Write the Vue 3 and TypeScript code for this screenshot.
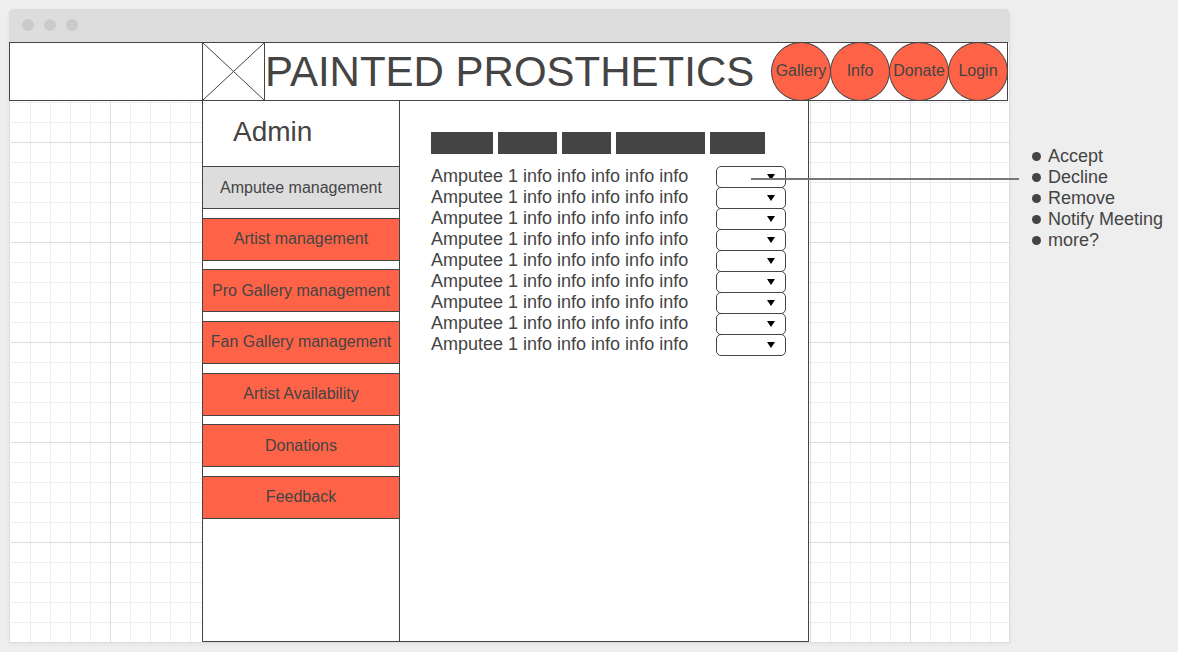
<script setup lang="ts">
import { ref } from 'vue'

interface Row {
  id: number
  label: string
}

const navLinks: string[] = ['Gallery', 'Info', 'Donate', 'Login']

const sections: string[] = [
  'Amputee management',
  'Artist management',
  'Pro Gallery management',
  'Fan Gallery management',
  'Artist Availability',
  'Donations',
  'Feedback',
]
const active = ref<string>(sections[0])

const filters: string[] = ['w62', 'w59', 'w49', 'w89', 'w55']

const rows: Row[] = Array.from({ length: 9 }, (_, i) => ({
  id: i + 1,
  label: 'Amputee 1 info info info info info',
}))

const actions: string[] = ['Accept', 'Decline', 'Remove', 'Notify Meeting', 'more?']
</script>

<template>
  <div class="page">
    <div class="window">
      <div class="titlebar">
        <span class="dot"></span>
        <span class="dot"></span>
        <span class="dot"></span>
      </div>
      <div class="canvas">
        <header class="header">
          <svg class="logo" viewBox="0 0 63 59" aria-hidden="true">
            <rect x="0.5" y="0.5" width="62" height="58" fill="#fff" stroke="#444" />
            <path d="M0.5 0.5L62.5 58.5M62.5 0.5L0.5 58.5" fill="none" stroke="#444" />
          </svg>
          <h1 class="brand">PAINTED PROSTHETICS</h1>
          <nav class="nav">
            <a v-for="link in navLinks" :key="link" class="nav-link" href="#">{{ link }}</a>
          </nav>
        </header>
        <div class="body">
          <aside class="sidebar">
            <h2 class="heading">Admin</h2>
            <div class="menu">
              <button
                v-for="section in sections"
                :key="section"
                type="button"
                class="menu-item"
                :class="{ active: section === active }"
                @click="active = section"
              >
                {{ section }}
              </button>
            </div>
          </aside>
          <main class="content">
            <div class="filters">
              <span v-for="f in filters" :key="f" class="filter" :class="f"></span>
            </div>
            <ul class="rows">
              <li v-for="row in rows" :key="row.id" class="row">
                <label :for="`action-${row.id}`">{{ row.label }}</label>
                <span class="picker">
                  <select :id="`action-${row.id}`" class="select"></select>
                  <svg class="arrow" viewBox="0 0 8 6" aria-hidden="true">
                    <path d="M0 0H8L4 6Z" fill="#000" />
                  </svg>
                  <span v-if="row.id === 1" class="connector"></span>
                </span>
              </li>
            </ul>
          </main>
        </div>
      </div>
    </div>
    <ul class="notes">
      <li v-for="action in actions" :key="action" class="note">{{ action }}</li>
    </ul>
  </div>
</template>

<style>
body {
  margin: 0;
  background: #eee;
}
</style>

<style scoped>
.page {
  box-sizing: border-box;
  display: flex;
  min-height: 100vh;
  padding: 9px;
  color: #444;
  font-family: "Liberation Sans", Arial, sans-serif;
  font-size: 16px;
}
.window {
  display: flex;
  flex: 1;
  flex-direction: column;
  border-radius: 5px 5px 0 0;
  box-shadow: 0 1px 4px rgba(0, 0, 0, 0.05);
}
.titlebar {
  display: flex;
  gap: 10px;
  height: 23px;
  padding: 10px 13px 0;
  border-radius: 5px 5px 0 0;
  background: #ddd;
}
.dot {
  width: 12px;
  height: 12px;
  border-radius: 50%;
  background: #cacaca;
}
.canvas {
  display: flex;
  flex: 1;
  flex-direction: column;
  padding-right: 2px;
  background:
    linear-gradient(#ddd, #ddd) left / 1px 100% no-repeat,
    linear-gradient(#ddd, #ddd) right / 1px 100% no-repeat,
    linear-gradient(#ddd, #ddd) bottom / 100% 1px no-repeat,
    linear-gradient(#fff, #fff) left / 2px 100% no-repeat,
    linear-gradient(90deg, transparent 99px, #ddd 99px) 2px 1px / 100px 100px,
    linear-gradient(transparent 99px, #ddd 99px) 2px 1px / 100px 100px,
    linear-gradient(90deg, transparent 19px, #eee 19px) 2px 1px / 20px 20px,
    linear-gradient(transparent 19px, #eee 19px) 2px 1px / 20px 20px,
    #fff;
}
.header {
  display: flex;
  align-items: center;
  height: 57px;
  padding-left: 192px;
  border: 1px solid #444;
  background: #fff;
}
.logo {
  flex: none;
  width: 63px;
  height: 59px;
}
.brand {
  margin: 0;
  font-size: 42px;
  font-weight: 400;
  line-height: 48px;
  white-space: nowrap;
}
.nav {
  display: flex;
  margin: -1px -1px -1px auto;
}
.nav-link {
  box-sizing: border-box;
  display: flex;
  align-items: center;
  justify-content: center;
  width: 60px;
  height: 59px;
  padding-bottom: 2px;
  border: 1px solid #444;
  border-radius: 50%;
  background: #ff6347;
  color: inherit;
  text-decoration: none;
}
.nav-link + .nav-link {
  margin-left: -1px;
}
.body {
  display: flex;
  flex: 1;
  margin: -1px 199px 1px 193px;
}
.sidebar {
  flex: none;
  width: 196px;
  border: 1px solid #444;
  background: #fff;
}
.heading {
  margin: 0;
  padding: 15px 30px 18px;
  font-size: 28px;
  font-weight: 400;
  line-height: 32px;
}
.menu {
  display: flex;
  flex-direction: column;
  justify-content: space-between;
  height: 353px;
}
.menu-item {
  height: 43px;
  padding: 0;
  border: solid #444;
  border-width: 1px 0;
  background: #ff6347;
  color: inherit;
  font: inherit;
}
.menu-item.active {
  background: #ddd;
}
.content {
  flex: 1;
  padding: 31px 22px 31px 31px;
  border: 1px solid #444;
  border-left: 0;
  background: #fff;
}
.filters {
  display: flex;
  gap: 5px;
}
.filter {
  height: 22px;
  background: #444;
}
.w62 { width: 62px; }
.w59 { width: 59px; }
.w49 { width: 49px; }
.w89 { width: 89px; }
.w55 { width: 55px; }
.rows {
  margin: 12px 0 0;
  padding: 0;
  list-style: none;
}
.row {
  display: flex;
  justify-content: space-between;
  height: 21px;
  font-size: 18px;
  line-height: 21px;
  white-space: nowrap;
}
.picker {
  position: relative;
  width: 70px;
}
.select {
  appearance: none;
  box-sizing: border-box;
  display: block;
  width: 70px;
  height: 22px;
  margin: 0;
  border: 1px solid #444;
  border-radius: 5px;
  background: #fff;
}
.arrow {
  position: absolute;
  top: 8px;
  left: 51px;
  width: 8px;
  height: 6px;
  pointer-events: none;
}
.connector {
  position: absolute;
  top: 12px;
  left: 35px;
  width: 268px;
  height: 2px;
  background: #777;
}
.notes {
  flex: none;
  width: 137px;
  margin: 137px 0 0;
  padding: 0 0 0 22px;
  list-style: none;
  font-size: 18px;
  line-height: 21px;
  white-space: nowrap;
}
.note {
  display: flex;
  align-items: center;
  gap: 7px;
}
.note::before {
  width: 9px;
  height: 9px;
  border-radius: 50%;
  background: #444;
  content: "";
}
</style>
